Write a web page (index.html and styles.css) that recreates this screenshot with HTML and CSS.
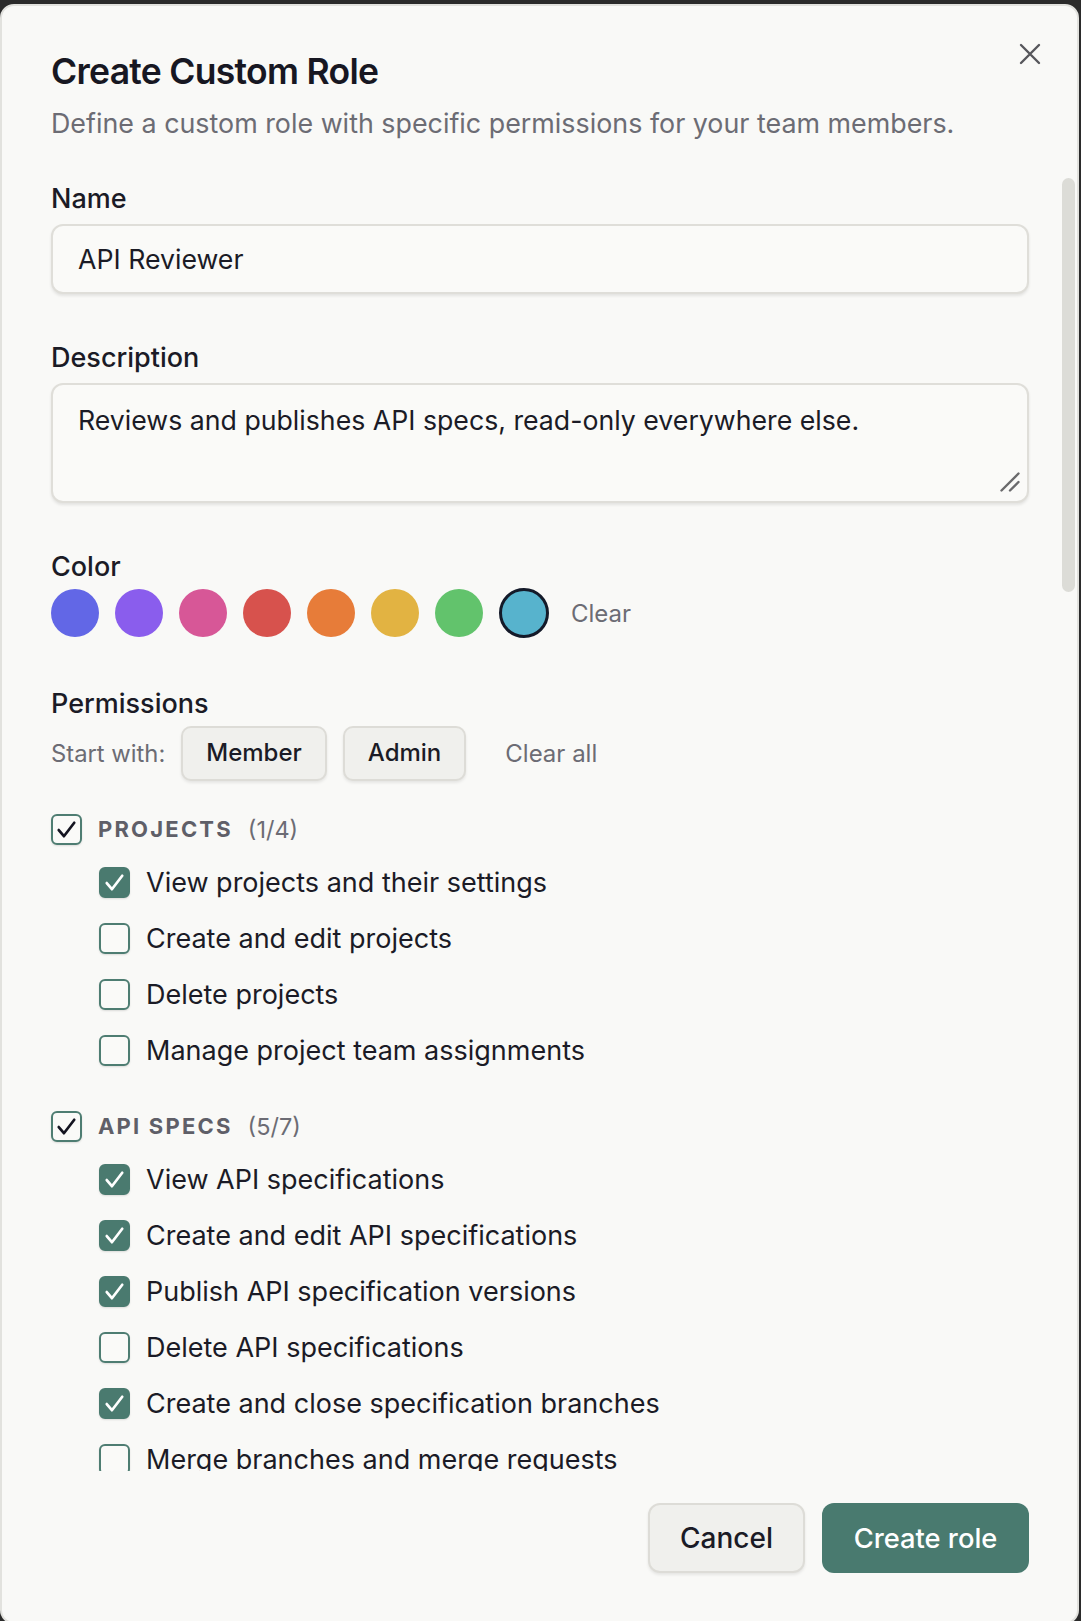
FILE: index.html
```html
<!DOCTYPE html>
<html lang="en">
<head>
<meta charset="utf-8">
<title>Create Custom Role</title>
<link rel="stylesheet" href="styles.css">
</head>
<body>
<div class="dialog" role="dialog" aria-labelledby="dlg-title">
  <header class="dialog-header">
    <h2 id="dlg-title" class="dialog-title">Create Custom Role</h2>
    <p class="dialog-desc">Define a custom role with specific permissions for your team members.</p>
    <button class="close-btn" type="button" aria-label="Close">
      <svg viewBox="0 0 32 32" width="32" height="32"><path d="M7 7 L25 25 M25 7 L7 25" /></svg>
    </button>
  </header>

  <div class="dialog-body">
    <div class="field">
      <label class="field-label" for="role-name">Name</label>
      <input id="role-name" class="text-input" type="text" value="API Reviewer">
    </div>

    <div class="field">
      <label class="field-label" for="role-desc">Description</label>
      <div class="area-wrap">
        <textarea id="role-desc" class="text-area">Reviews and publishes API specs, read-only everywhere else.</textarea>
        <svg class="resize-grip" viewBox="0 0 20 20" width="20" height="20" aria-hidden="true"><path d="M1.5 18.5 L18.5 1.5 M10 18.5 L18.5 10" /></svg>
      </div>
    </div>

    <div class="field field-color">
      <span class="field-label">Color</span>
      <div class="swatches">
        <span class="swatch c-indigo"></span>
        <span class="swatch c-violet"></span>
        <span class="swatch c-pink"></span>
        <span class="swatch c-red"></span>
        <span class="swatch c-orange"></span>
        <span class="swatch c-amber"></span>
        <span class="swatch c-green"></span>
        <span class="swatch c-cyan selected"></span>
        <button class="link-btn swatch-clear" type="button">Clear</button>
      </div>
    </div>

    <div class="field field-perms">
      <span class="field-label">Permissions</span>
      <div class="preset-row">
        <span class="preset-label">Start with:</span>
        <button class="btn-chip" type="button">Member</button>
        <button class="btn-chip" type="button">Admin</button>
        <button class="link-btn clear-all" type="button">Clear all</button>
      </div>
    </div>

    <section class="perm-group">
      <div class="group-head">
        <span class="cbox parent on"><svg viewBox="0 0 30 30"><path d="M7.5 15.5 L12.5 21.5 L22.5 8.5"/></svg></span>
        <span class="group-name">PROJECTS</span>
        <span class="group-count">(1/4)</span>
      </div>
      <div class="items">
        <div class="item"><span class="cbox on"><svg viewBox="0 0 30 30"><path d="M7.5 15.5 L12.5 21.5 L22.5 8.5"/></svg></span><span>View projects and their settings</span></div>
        <div class="item"><span class="cbox"></span><span>Create and edit projects</span></div>
        <div class="item"><span class="cbox"></span><span>Delete projects</span></div>
        <div class="item"><span class="cbox"></span><span>Manage project team assignments</span></div>
      </div>
    </section>

    <section class="perm-group">
      <div class="group-head">
        <span class="cbox parent on"><svg viewBox="0 0 30 30"><path d="M7.5 15.5 L12.5 21.5 L22.5 8.5"/></svg></span>
        <span class="group-name">API SPECS</span>
        <span class="group-count">(5/7)</span>
      </div>
      <div class="items">
        <div class="item"><span class="cbox on"><svg viewBox="0 0 30 30"><path d="M7.5 15.5 L12.5 21.5 L22.5 8.5"/></svg></span><span>View API specifications</span></div>
        <div class="item"><span class="cbox on"><svg viewBox="0 0 30 30"><path d="M7.5 15.5 L12.5 21.5 L22.5 8.5"/></svg></span><span>Create and edit API specifications</span></div>
        <div class="item"><span class="cbox on"><svg viewBox="0 0 30 30"><path d="M7.5 15.5 L12.5 21.5 L22.5 8.5"/></svg></span><span>Publish API specification versions</span></div>
        <div class="item"><span class="cbox"></span><span>Delete API specifications</span></div>
        <div class="item"><span class="cbox on"><svg viewBox="0 0 30 30"><path d="M7.5 15.5 L12.5 21.5 L22.5 8.5"/></svg></span><span>Create and close specification branches</span></div>
        <div class="item"><span class="cbox"></span><span>Merge branches and merge requests</span></div>
      </div>
    </section>
  </div>

  <!-- overlay scrollbar thumb for the permissions body -->
  <div class="scroll-thumb" aria-hidden="true"></div>

  <footer class="dialog-footer">
    <button class="btn btn-secondary" type="button">Cancel</button>
    <button class="btn btn-primary" type="button">Create role</button>
  </footer>
</div>
</body>
</html>
```

FILE: styles.css
```css
* {
  box-sizing: border-box;
}

html,
body {
  margin: 0;
  height: 100%;
}

body {
  background: #2b2b2b;
  padding-top: 4px;
  overflow: hidden;
  font-family: Inter, "Noto Sans", "Liberation Sans", sans-serif;
  color: #1b1b26;
}

button,
input,
textarea {
  font-family: inherit;
}

/* ---------- dialog shell ---------- */
.dialog {
  position: relative;
  width: 1079px;
  height: 1620px;
  background: #f9f9f7;
  border: 2px solid #e2e2de;
  border-radius: 14px;
  display: flex;
  flex-direction: column;
  overflow: hidden;
}

.dialog-header {
  padding: 45px 48px 36px 49px;
  flex: none;
}

.dialog-title {
  margin: 0;
  font-size: 35.5px;
  line-height: 42px;
  font-weight: 600;
  letter-spacing: -0.02em;
  color: #171722;
}

.dialog-desc {
  margin: 13px 0 0;
  font-size: 26.85px;
  line-height: 34px;
  color: #6c6c74;
}

.close-btn {
  position: absolute;
  top: 32px;
  right: 31px;
  width: 32px;
  height: 32px;
  padding: 0;
  border: 0;
  background: none;
}

.close-btn svg {
  display: block;
  fill: none;
  stroke: #57575c;
  stroke-width: 2.4;
  stroke-linecap: round;
}

/* ---------- scrolling body ---------- */
.dialog-body {
  flex: 1;
  min-height: 0;
  overflow: hidden;
  padding: 7px 48px 60px 49px;
}

.scroll-thumb {
  position: absolute;
  left: 1060px;
  top: 172px;
  width: 13px;
  height: 414px;
  border-radius: 7px;
  background: #dcdcd7;
}

.field {
  display: flex;
  flex-direction: column;
  gap: 9px;
  margin-bottom: 48px;
}

.field-label {
  font-size: 27px;
  line-height: 32px;
  font-weight: 500;
  color: #1b1b26;
}

.text-input,
.text-area {
  width: 100%;
  border: 2px solid #dfded9;
  border-radius: 12px;
  background: #fafaf8;
  box-shadow: 0 2px 3px rgba(0, 0, 0, 0.09);
  font-size: 26.7px;
  color: #1b1b26;
  outline: none;
}

.text-input {
  height: 70px;
  padding: 0 25px;
}

.area-wrap {
  position: relative;
}

.text-area {
  height: 120px;
  padding: 18px 25px;
  line-height: 34px;
  resize: none;
  display: block;
}

.resize-grip {
  position: absolute;
  right: 9px;
  bottom: 11px;
  fill: none;
  stroke: #6a6a6c;
  stroke-width: 2.4;
  stroke-linecap: round;
}

/* colour picker */
.field-color {
  gap: 5px;
  margin-bottom: 50px;
}

.swatches {
  display: flex;
  align-items: center;
  gap: 16px;
}

.swatch {
  width: 48px;
  height: 48px;
  border-radius: 50%;
  flex: none;
}

.swatch.selected {
  width: 50px;
  height: 50px;
  border: 3.5px solid #141a29;
}

.c-indigo { background: #6267e6; }
.c-violet { background: #8a5ded; }
.c-pink { background: #d75797; }
.c-red { background: #d7524d; }
.c-orange { background: #e77c39; }
.c-amber { background: #e2b342; }
.c-green { background: #62c36c; }
.c-cyan { background: #57b3cd; }

.link-btn {
  border: 0;
  background: none;
  padding: 0;
  font-size: 24px;
  color: #6c6c74;
}

.swatch-clear {
  margin-left: 6px;
}

/* presets */
.field-perms {
  gap: 6px;
  margin-bottom: 32px;
}

.preset-row {
  display: flex;
  align-items: center;
  gap: 16px;
}

.preset-label {
  font-size: 23.8px;
  color: #6c6c74;
  margin-right: 0;
}

.btn-chip {
  height: 55px;
  padding: 0 23px 2px;
  border: 2px solid #dddcd7;
  border-radius: 10px;
  background: #f0f0ed;
  box-shadow: 0 2px 3px rgba(0, 0, 0, 0.08);
  font-size: 24px;
  font-weight: 500;
  color: #1b1b26;
}

.clear-all {
  padding: 0 23px;
}

/* ---------- permission groups ---------- */
.perm-group + .perm-group {
  margin-top: 44px;
}

.group-head {
  display: flex;
  align-items: center;
  height: 32px;
}

.group-name {
  margin-left: 16px;
  font-size: 22px;
  font-weight: 700;
  letter-spacing: 0.1em;
  color: #5f5f68;
}

.group-count {
  margin-left: 15px;
  font-size: 23.5px;
  color: #6c6c74;
}

.items {
  display: flex;
  flex-direction: column;
  gap: 24px;
  margin-top: 21px;
  padding-left: 48px;
}

.item {
  display: flex;
  align-items: center;
  gap: 16px;
  height: 32px;
  font-size: 27px;
  color: #1b1b26;
}

.cbox {
  width: 31px;
  height: 31px;
  flex: none;
  border: 2px solid #4e7d72;
  border-radius: 6px;
  background: #fafaf8;
  box-shadow: 0 1px 2px rgba(0, 0, 0, 0.12);
  display: flex;
  align-items: center;
  justify-content: center;
}

.cbox svg {
  width: 31px;
  height: 31px;
  margin: -2px;
  fill: none;
  stroke-width: 2.6;
  stroke-linecap: round;
  stroke-linejoin: round;
}

.cbox.on {
  background: #4a7a6f;
  border-color: #4a7a6f;
}

.cbox.on svg {
  stroke: #ffffff;
}

.cbox.parent.on {
  background: #fafaf8;
  border-color: #4e7d72;
}

.cbox.parent.on svg {
  stroke: #141420;
}

/* ---------- footer ---------- */
.dialog-footer {
  flex: none;
  display: flex;
  justify-content: flex-end;
  gap: 17px;
  padding: 32px 48px 49px;
}

.btn {
  height: 70px;
  border-radius: 12px;
  font-size: 28px;
  font-weight: 500;
}

.btn-secondary {
  width: 157px;
  border: 2px solid #dddcd7;
  background: #f0f0ed;
  color: #1b1b26;
  box-shadow: 0 2px 3px rgba(0, 0, 0, 0.08);
}

.btn-primary {
  width: 207px;
  border: 0;
  background: #497a6f;
  color: #ffffff;
  font-size: 27.3px;
}
```
